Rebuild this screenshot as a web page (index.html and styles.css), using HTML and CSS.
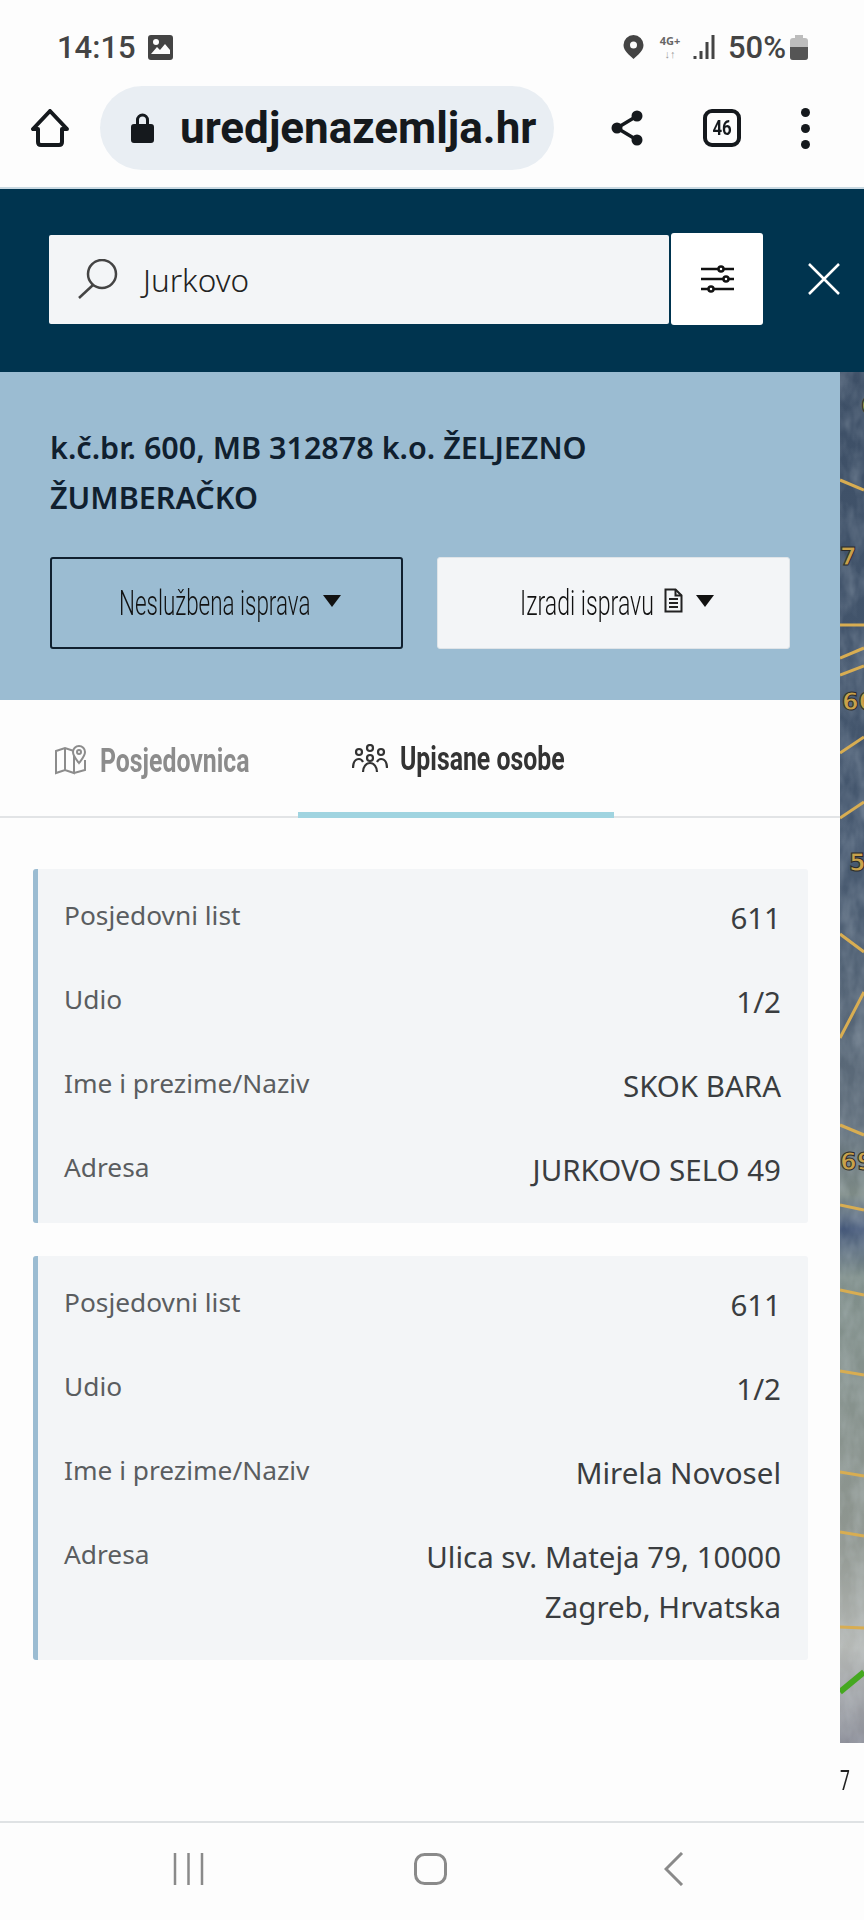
FILE: index.html
```html
<!DOCTYPE html>
<html>
<head>
  <title>uredjenazemlja.hr</title>
  <link rel="stylesheet" href="styles.css">
</head>
<body>

  <header class="status-bar">
    <span class="clock">14:15</span>
    <svg class="status-pic" viewBox="0 0 25 25"><path fill="#444" fill-rule="evenodd" d="M3 0h19a3 3 0 0 1 3 3v19a3 3 0 0 1-3 3H3a3 3 0 0 1-3-3V3a3 3 0 0 1 3-3zM3 19h19v-4l-5-6-5 6-3-3-6 7z"/><circle cx="8" cy="7" r="3" fill="#fff"/></svg>
    <span class="status-right">
      <svg class="status-pin" viewBox="0 0 21 24"><path fill="#444" fill-rule="evenodd" d="M10.500 0a10 10 0 0 1 10 10c0 6-6 10-10 14-4-4-10-8-10-14a10 10 0 0 1 10-10zm0 6.500a3.500 3.500 0 1 0 0 7 3.500 3.500 0 0 0 0-7z"/></svg>
      <span class="network"><b>4G+</b><i>↓↑</i></span>
      <svg class="status-signal" viewBox="0 0 22 24"><path stroke="#444" stroke-width="3" d="M2 24v-3M8 24v-8M14 24V7M20 24V0" fill="none"/></svg>
      <span class="battery-text">50%</span>
      <span class="battery"><span class="battery-fill"></span></span>
    </span>
  </header>

  <nav class="toolbar">
    <svg class="home-icon" viewBox="0 0 38 38"><path d="M19 2 2 20h5v13q0 3 3 3h18q3 0 3-3V20h5z" fill="none" stroke="#15191d" stroke-width="4" stroke-linejoin="round"/></svg>
    <div class="url-pill">
      <svg class="lock-icon" viewBox="0 0 23 30"><path fill="#15191d" d="M5 11V7a6.500 6.500 0 0 1 13 0v4h2a3 3 0 0 1 3 3v13a3 3 0 0 1-3 3H3a3 3 0 0 1-3-3V14a3 3 0 0 1 3-3zm3 0h7V7a3.500 3.500 0 0 0-7 0z"/></svg>
      <span class="url-text">uredjenazemlja.hr</span>
    </div>
    <svg class="share-icon" viewBox="0 0 32 36"><path d="M26 6 6 18l20 12" fill="none" stroke="#15191d" stroke-width="3.500"/><circle cx="26" cy="6" r="5.500" fill="#15191d"/><circle cx="6" cy="18" r="5.500" fill="#15191d"/><circle cx="26" cy="30" r="5.500" fill="#15191d"/></svg>
    <span class="tab-count"><span class="tab-count-num">46</span></span>
    <span class="menu-dots"><i></i><i></i><i></i></span>
  </nav>

  <section class="search-bar">
    <div class="search-box">
      <svg class="search-icon" viewBox="0 0 41 40"><circle cx="25" cy="15" r="14" fill="none" stroke="#444" stroke-width="2.500"/><path d="M16 26 2 39" fill="none" stroke="#444" stroke-width="2.500"/></svg>
      <span class="search-text">Jurkovo</span>
    </div>
    <button class="filter-btn">
      <svg viewBox="0 0 33 28" width="33" height="28"><g stroke="#111" stroke-width="2.500" fill="none"><path d="M0 4h33M0 14h33M0 24h33"/><circle cx="20" cy="4" r="2.500" fill="#fff"/><circle cx="25" cy="14" r="2.500" fill="#fff"/><circle cx="10" cy="24" r="2.500" fill="#fff"/></g></svg>
    </button>
    <svg class="close-icon" viewBox="0 0 32 32"><path d="M1 1l30 30M31 1 1 31" stroke="#fff" stroke-width="2.500" fill="none"/></svg>
  </section>

  <main class="content">
    <div class="panel">
      <section class="parcel">
        <h1 class="parcel-title">k.č.br. 600, MB 312878 k.o. ŽELJEZNO ŽUMBERAČKO</h1>
        <div class="parcel-actions">
          <button class="doc-btn doc-btn-outline">
            <span class="cond doc-label-a">Neslužbena isprava</span>
            <span class="caret"></span>
          </button>
          <button class="doc-btn doc-btn-light">
            <span class="cond doc-label-b">Izradi ispravu</span>
            <svg class="doc-icon" viewBox="0 0 19 25"><path d="M1.500 1.500h10l6 6v16h-16z" fill="none" stroke="#222" stroke-width="2"/><path d="M11.500 1.500v6h6M5 11h9M5 15h9M5 19h9" fill="none" stroke="#222" stroke-width="2"/></svg>
            <span class="caret"></span>
          </button>
        </div>
      </section>

      <div class="tabs">
        <div class="tab tab-map">
          <svg class="tab-icon-map" viewBox="0 0 32 32"><g fill="none" stroke="#8c8c8c" stroke-width="2"><path d="M1 7l9-3 9 3v22l-9-3-9 3zM10 4v22M19 29l11-3V16"/><path d="M24 19c-3-4-6-7-6-11a6 6 0 0 1 12 0c0 4-3 7-6 11z" fill="#fdfdfd"/><circle cx="24" cy="8" r="2"/></g></svg>
          <span class="cond tab-label tab-label-map">Posjedovnica</span>
        </div>
        <div class="tab tab-people">
          <svg class="tab-icon-people" viewBox="0 0 36 28"><g fill="none" stroke="#333" stroke-width="2.200"><circle cx="18" cy="4" r="3"/><circle cx="7" cy="8" r="3"/><circle cx="29" cy="8" r="3"/><circle cx="18" cy="14" r="3"/><path d="M1 24c0-5 2-9 6-9 2 0 3 1 4 3M35 24c0-5-2-9-6-9-2 0-3 1-4 3M11 28c0-5 3-9 7-9s7 4 7 9"/></g></svg>
          <span class="cond tab-label tab-label-people">Upisane osobe</span>
        </div>
      </div>

      <div class="cards">
        <article class="card">
          <div class="row"><span class="row-label">Posjedovni list</span><span class="row-value">611</span></div>
          <div class="row"><span class="row-label">Udio</span><span class="row-value">1/2</span></div>
          <div class="row"><span class="row-label">Ime i prezime/Naziv</span><span class="row-value">SKOK BARA</span></div>
          <div class="row"><span class="row-label">Adresa</span><span class="row-value">JURKOVO SELO 49</span></div>
        </article>
        <article class="card">
          <div class="row"><span class="row-label">Posjedovni list</span><span class="row-value">611</span></div>
          <div class="row"><span class="row-label">Udio</span><span class="row-value">1/2</span></div>
          <div class="row"><span class="row-label">Ime i prezime/Naziv</span><span class="row-value">Mirela Novosel</span></div>
          <div class="row"><span class="row-label">Adresa</span><span class="row-value">Ulica sv. Mateja 79, 10000 Zagreb, Hrvatska</span></div>
        </article>
      </div>
    </div>

    <aside class="map-strip">
      <svg class="map-img" viewBox="0 0 24 1371" preserveAspectRatio="none">
        <defs>
          <linearGradient id="mapBg" x1="0" y1="0" x2="0" y2="1">
            <stop offset="0" stop-color="#3d4f66"/>
            <stop offset=".35" stop-color="#46586f"/>
            <stop offset=".55" stop-color="#5f6d7a"/>
            <stop offset=".6" stop-color="#7d8a86"/>
            <stop offset=".625" stop-color="#46597a"/>
            <stop offset=".66" stop-color="#7f8e8a"/>
            <stop offset=".85" stop-color="#8f9690"/>
            <stop offset=".93" stop-color="#b4b7b4"/>
            <stop offset="1" stop-color="#8d8f99"/>
          </linearGradient>
          <filter id="mapNoise" x="0" y="0" width="100%" height="100%">
            <feTurbulence type="fractalNoise" baseFrequency=".07 .035" numOctaves="3" seed="4"/>
            <feColorMatrix values="0 0 0 0 .8  0 0 0 0 .88  0 0 0 0 .95  1.100 0 0 0 -.35"/>
          </filter>
        </defs>
        <rect width="24" height="1371" fill="url(#mapBg)"/>
        <rect width="24" height="1371" filter="url(#mapNoise)" opacity=".35"/>
        <g stroke="#d8ad52" stroke-width="3" fill="none">
          <path d="M0 108l24 10M0 253h24M0 286l24-10M0 303l24-9M0 381l24-16M0 446l24-16M0 562l24 18M0 666l24-46M0 753l24 10M0 833l24 5M0 918l24 5M0 999l24 4M0 1100l24 4M0 1160l24 4M0 1255l24 1"/>
        </g>
        <path d="M0 1320l24-20" stroke="#45a820" stroke-width="6" fill="none"/>
        <g class="map-nums">
          <text x="21" y="42">6</text>
          <text x="0" y="193">7</text>
          <text x="2" y="338">60</text>
          <text x="9" y="499">5</text>
          <text x="0" y="798">69</text>
        </g>
      </svg>
      <span class="cond map-caption">7</span>
    </aside>
  </main>

  <footer class="nav-bar">
    <svg class="nav-recent" viewBox="0 0 31 32"><path d="M2 0v32M15.500 0v32M29 0v32" stroke="#8a8a8a" stroke-width="2.500" fill="none"/></svg>
    <svg class="nav-home" viewBox="0 0 33 32"><rect x="1.500" y="1.500" width="30" height="29" rx="9" fill="none" stroke="#8a8a8a" stroke-width="3"/></svg>
    <svg class="nav-back" viewBox="0 0 20 34"><path d="M18 1 2 17l16 16" stroke="#8a8a8a" stroke-width="3" fill="none"/></svg>
  </footer>

</body>
</html>
```

FILE: styles.css
```css
* {
  box-sizing: border-box;
}

body {
  margin: 0;
  width: 864px;
  height: 1920px;
  overflow: hidden;
  display: flex;
  flex-direction: column;
  font-family: "Noto Sans", sans-serif;
  background-color: #fdfdfd;
  color: #333;
}

/* status bar */
.status-bar {
  height: 86px;
  padding: 8px 56px 0 57px;
  display: flex;
  align-items: center;
  color: #444;
}

.clock {
  font-family: Roboto, sans-serif;
  font-size: 31px;
  font-weight: 500;
  width: 91px;
}

.status-pic {
  width: 25px;
  height: 25px;
}

.status-right {
  margin-left: auto;
  display: flex;
  align-items: center;
}

.status-pin {
  width: 21px;
  height: 24px;
}

.network {
  width: 26px;
  margin-left: 13px;
  display: flex;
  flex-direction: column;
  align-items: center;
  color: #666;
}

.network b {
  font-size: 11px;
  line-height: 13px;
  font-weight: 700;
}

.network i {
  font-size: 11px;
  line-height: 13px;
  font-style: normal;
  color: #999;
}

.status-signal {
  width: 22px;
  height: 24px;
  margin-left: 10px;
}

.battery-text {
  font-family: Roboto, sans-serif;
  font-size: 31px;
  font-weight: 500;
  margin-left: 13px;
}

.battery {
  width: 18px;
  height: 22px;
  margin: 3px 0 0 4px;
  border-radius: 3px;
  background-color: #bdbdbd;
  display: flex;
  align-items: flex-end;
  position: relative;
}

.battery::before {
  content: "";
  position: absolute;
  top: -3px;
  left: 5px;
  width: 8px;
  height: 3px;
  background-color: #bdbdbd;
}

.battery-fill {
  width: 100%;
  height: 55%;
  border-radius: 0 0 3px 3px;
  background-color: #555;
}

/* browser toolbar */
.toolbar {
  height: 103px;
  padding: 1px 0 18px 31px;
  display: flex;
  align-items: center;
  border-bottom: 2px solid #c9d9e2;
}

.home-icon {
  width: 38px;
  height: 38px;
}

.url-pill {
  width: 454px;
  height: 84px;
  margin-left: 31px;
  border-radius: 42px;
  background-color: #e9eef3;
  display: flex;
  align-items: center;
  padding-left: 31px;
}

.lock-icon {
  width: 23px;
  height: 30px;
}

.url-text {
  margin-left: 26px;
  font-family: Roboto, sans-serif;
  font-size: 44px;
  font-weight: 700;
  color: #15191d;
}

.share-icon {
  width: 32px;
  height: 36px;
  margin-left: 57px;
}

.tab-count {
  width: 38px;
  height: 38px;
  margin-left: 60px;
  border: 4px solid #15191d;
  border-radius: 9px;
  display: flex;
  align-items: center;
  justify-content: center;
}

.tab-count-num {
  font-family: Roboto, sans-serif;
  font-size: 21px;
  font-weight: 700;
  color: #15191d;
  transform: scaleX(.8);
}

.menu-dots {
  margin-left: 60px;
  display: flex;
  flex-direction: column;
  gap: 7px;
}

.menu-dots i {
  width: 9px;
  height: 9px;
  border-radius: 50%;
  background-color: #15191d;
}

/* search */
.search-bar {
  height: 183px;
  padding: 0 0 3px 49px;
  background-color: #00344f;
  display: flex;
  align-items: center;
}

.search-box {
  width: 620px;
  height: 89px;
  padding-left: 28px;
  border-radius: 2px;
  background-color: #f3f5f7;
  display: flex;
  align-items: center;
}

.search-icon {
  width: 41px;
  height: 40px;
}

.search-text {
  margin-left: 25px;
  font-size: 31.500px;
  font-weight: 300;
  color: #222;
}

.filter-btn {
  width: 92px;
  height: 92px;
  margin-left: 2px;
  padding: 0;
  border: none;
  border-radius: 3px;
  background-color: #fff;
  display: flex;
  align-items: center;
  justify-content: center;
}

.close-icon {
  width: 32px;
  height: 32px;
  margin-left: 45px;
}

/* main area */
.content {
  height: 1449px;
  display: flex;
}

.panel {
  width: 840px;
}

.parcel {
  height: 328px;
  padding: 50px 50px 0;
  background-color: #9bbcd2;
}

.parcel-title {
  margin: 0;
  max-width: 600px;
  font-size: 30.500px;
  font-weight: 600;
  line-height: 50px;
  color: #10202f;
}

.parcel-actions {
  margin-top: 35px;
  display: flex;
  gap: 34px;
}

.doc-btn {
  width: 353px;
  height: 92px;
  padding: 0;
  border-radius: 3px;
  display: flex;
  align-items: center;
  font-family: Roboto, sans-serif;
  font-size: 34.500px;
  font-weight: 300;
  color: #111;
}

.doc-btn-outline {
  border: 2px solid #10202f;
  background-color: transparent;
  padding-left: 67px;
}

.doc-btn-light {
  border: 1px solid #dfe4e8;
  background-color: #f3f5f7;
  padding-left: 82px;
}

.cond {
  display: inline-block;
  white-space: nowrap;
  transform: scaleX(.65);
  transform-origin: left center;
}

.doc-label-a {
  width: 204px;
}

.doc-label-b {
  width: 144px;
  transform: scaleX(.67);
}

.caret {
  width: 0;
  height: 0;
  border-left: 9px solid transparent;
  border-right: 9px solid transparent;
  border-top: 12px solid #111;
  margin-top: -4px;
}

.doc-icon {
  width: 19px;
  height: 25px;
  margin: -6px 13px 0 0;
}

.tabs {
  height: 118px;
  display: flex;
  border-bottom: 2px solid #e2e4e6;
}

.tab {
  display: flex;
  align-items: center;
}

.tab-map {
  width: 298px;
  padding: 4px 0 0 55px;
}

.tab-people {
  width: 316px;
  height: 118px;
  padding: 4px 0 0 54px;
  border-bottom: 6px solid #a0d4e0;
}

.tab-icon-map {
  flex: none;
  width: 32px;
  height: 32px;
}

.tab-icon-people {
  flex: none;
  width: 36px;
  height: 28px;
}

.tab-label {
  flex: none;
  margin-left: 13px;
  font-family: Roboto, sans-serif;
  font-size: 34px;
  font-weight: 700;
  transform: scaleX(.73);
}

.tab-label-map {
  color: #8c8c8c;
}

.tab-label-people {
  margin-left: 12px;
  color: #333;
}

.cards {
  padding: 51px 32px 0 33px;
  display: flex;
  flex-direction: column;
  gap: 33px;
}

.card {
  padding: 24px 27px 28px 26px;
  border-left: 5px solid #9bbcd2;
  border-radius: 3px;
  background-color: #f3f5f7;
  display: flex;
  flex-direction: column;
  gap: 34px;
}

.row {
  display: flex;
  justify-content: space-between;
  align-items: flex-start;
}

.row-label {
  font-size: 26.300px;
  line-height: 44px;
  color: #5a5d60;
}

.row-value {
  max-width: 370px;
  text-align: right;
  font-size: 29.500px;
  line-height: 50px;
  color: #3a3d40;
}

.map-strip {
  width: 24px;
}

.map-img {
  display: block;
  width: 24px;
  height: 1371px;
}

.map-nums text {
  font-family: "DejaVu Sans", sans-serif;
  font-size: 24px;
  font-weight: 700;
  fill: #c9a24a;
  stroke: #2b2b2b;
  stroke-width: 1;
}

.map-caption {
  display: block;
  margin-top: 22px;
  font-family: Roboto, sans-serif;
  font-size: 27px;
  color: #222;
}

/* android nav */
.nav-bar {
  height: 99px;
  border-top: 2px solid #dfe2e4;
  display: flex;
  align-items: center;
  padding: 0 0 5px 173px;
}

.nav-recent {
  width: 31px;
  height: 32px;
}

.nav-home {
  width: 33px;
  height: 32px;
  margin-left: 210px;
}

.nav-back {
  width: 20px;
  height: 34px;
  margin-left: 217px;
}
```
